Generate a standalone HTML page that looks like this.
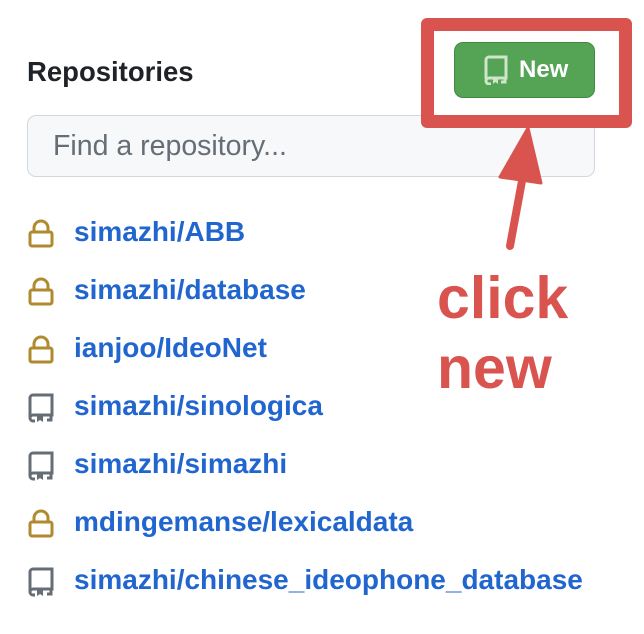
<!DOCTYPE html>
<html><head><style>
body{margin:0;width:644px;height:634px;background:#fff;position:relative;overflow:hidden;font-family:"Liberation Sans",sans-serif}
.h{position:absolute;left:27px;top:56px;font-size:27.5px;font-weight:bold;color:#1f2328}
.box{position:absolute;left:421px;top:18px;width:185px;height:84px;border:13px solid #d9534f;border-radius:6px;z-index:2}
.btn{position:absolute;left:454px;top:42px;width:141px;height:56px;background:#55a354;border:1px solid #3f8a3f;border-radius:9px;color:#fff;font-weight:bold;font-size:24px;box-sizing:border-box;z-index:2}
.btn span{position:absolute;left:64px;top:13px}
.in{position:absolute;left:27px;top:115px;width:568px;height:62px;box-sizing:border-box;background:#f6f8fa;border:1.5px solid #d0d7de;border-radius:9px;font-size:28.5px;color:#656d76;padding:14px 0 0 25px}
.r{position:absolute;left:27px;height:30px;font-size:28px;font-weight:bold;color:#2166cf}
.r svg{position:absolute;left:0;top:1px}
.r span{position:absolute;left:47px;top:-2px;white-space:nowrap}
.c{position:absolute;left:437px;font-size:59px;font-weight:bold;color:#d9534f}
</style></head><body>
<div class="h">Repositories</div>
<div class="in">Find a repository...</div>
<div class="box"></div>
<div class="btn"><svg style="position:absolute;left:28px;top:12px" width="26" height="30" viewBox="0 0 26 30" fill="none" stroke="#cfe6cd" stroke-width="3"><path d="M3 24V5a3 3 0 0 1 3-3h17v21H6a3 3 0 0 0-3 3 3 3 0 0 0 3 3h2M18 27h4v-3"/><path d="M10 23v6l2.5-2 2.5 2v-6z" fill="#cfe6cd" stroke="none"/></svg><span>New</span></div>
<svg style="position:absolute;left:0;top:0;z-index:3" width="644" height="634"><path d="M510 246 L524 170" stroke="#d9534f" stroke-width="8" stroke-linecap="round"/><path d="M528 128 L500 177 L541 183 Z" fill="#d9534f" stroke="#d9534f" stroke-width="3" stroke-linejoin="round"/></svg>
<div class="c" style="top:264px">click</div>
<div class="c" style="top:334px">new</div>

<div class="r" style="top:218px"><svg width="28" height="30" viewBox="0 0 28 30" fill="none" stroke="#b08a2e" stroke-width="3"><path d="M7 13V9a7 7 0 0 1 14 0v4"/><rect x="3" y="13" width="22" height="14" rx="2"/></svg><span>simazhi/ABB</span></div>
<div class="r" style="top:276px"><svg width="28" height="30" viewBox="0 0 28 30" fill="none" stroke="#b08a2e" stroke-width="3"><path d="M7 13V9a7 7 0 0 1 14 0v4"/><rect x="3" y="13" width="22" height="14" rx="2"/></svg><span>simazhi/database</span></div>
<div class="r" style="top:334px"><svg width="28" height="30" viewBox="0 0 28 30" fill="none" stroke="#b08a2e" stroke-width="3"><path d="M7 13V9a7 7 0 0 1 14 0v4"/><rect x="3" y="13" width="22" height="14" rx="2"/></svg><span>ianjoo/IdeoNet</span></div>
<div class="r" style="top:392px"><svg width="28" height="30" viewBox="0 0 28 30" fill="none" stroke="#656d76" stroke-width="3"><path d="M3 24V5a3 3 0 0 1 3-3h19v20H6a3 3 0 0 0-3 3 3 3 0 0 0 3 3h2M20 27h4v-4"/><path d="M10 22v7l3-2 3 2v-7z" fill="#656d76" stroke="none"/></svg><span>simazhi/sinologica</span></div>
<div class="r" style="top:450px"><svg width="28" height="30" viewBox="0 0 28 30" fill="none" stroke="#656d76" stroke-width="3"><path d="M3 24V5a3 3 0 0 1 3-3h19v20H6a3 3 0 0 0-3 3 3 3 0 0 0 3 3h2M20 27h4v-4"/><path d="M10 22v7l3-2 3 2v-7z" fill="#656d76" stroke="none"/></svg><span>simazhi/simazhi</span></div>
<div class="r" style="top:508px"><svg width="28" height="30" viewBox="0 0 28 30" fill="none" stroke="#b08a2e" stroke-width="3"><path d="M7 13V9a7 7 0 0 1 14 0v4"/><rect x="3" y="13" width="22" height="14" rx="2"/></svg><span>mdingemanse/lexicaldata</span></div>
<div class="r" style="top:566px"><svg width="28" height="30" viewBox="0 0 28 30" fill="none" stroke="#656d76" stroke-width="3"><path d="M3 24V5a3 3 0 0 1 3-3h19v20H6a3 3 0 0 0-3 3 3 3 0 0 0 3 3h2M20 27h4v-4"/><path d="M10 22v7l3-2 3 2v-7z" fill="#656d76" stroke="none"/></svg><span>simazhi/chinese_ideophone_database</span></div>
</body></html>
